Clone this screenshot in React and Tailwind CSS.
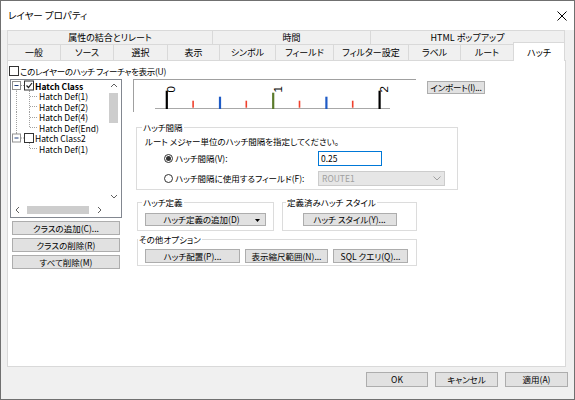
const ui = "font-['Noto_Sans_CJK_JP',sans-serif] [font-feature-settings:'palt']";

function Btn({ className = '', children }) {
  return (
    <div
      className={`flex items-center justify-center whitespace-nowrap border border-[#adadad] bg-[#e1e1e1] text-[8.5px] leading-none text-black ${className}`}
    >
      {children}
    </div>
  );
}

function Group({ title, className = '', legendClass = '', children }) {
  return (
    <fieldset className={`border border-[#dcdcdc] ${className}`}>
      <legend className={`px-[1px] text-[8.5px] leading-[12px] ${legendClass}`}>{title}</legend>
      {children}
    </fieldset>
  );
}

function Radio({ checked }) {
  return (
    <span className="flex h-[9px] w-[9px] shrink-0 items-center justify-center rounded-full border border-[#333] bg-white">
      {checked && <span className="h-[5px] w-[5px] rounded-full bg-[#333]" />}
    </span>
  );
}

function Chevron({ dir }) {
  const pts = {
    up: '1,5 4,2 7,5',
    down: '1,2 4,5 7,2',
    left: '5,1 2,4 5,7',
    right: '2,1 5,4 2,7',
  }[dir];
  return (
    <svg width="8" height="8" viewBox="0 0 8 8">
      <polyline points={pts} fill="none" stroke="#606060" strokeWidth="1" />
    </svg>
  );
}

// tree guide lines, drawn per row
const dot = { stroke: '#a0a0a0', strokeWidth: 1, strokeDasharray: '1 1' };

function ClassRow({ h, label, checked, bold, first }) {
  const c = h / 2;
  return (
    <div className="flex items-center" style={{ height: h }}>
      <svg width="24" height={h} className="shrink-0">
        {!first && <line x1="5.5" y1="0" x2="5.5" y2={c - 4} {...dot} />}
        {first && <line x1="5.5" y1={c + 4} x2="5.5" y2={h} {...dot} />}
        <rect x="1.5" y={c - 4} width="8" height="8" fill="white" stroke="#919191" />
        <line x1="3.5" y1={c} x2="7.5" y2={c} stroke="#1f3d7a" />
        <line x1="10" y1={c} x2="13" y2={c} {...dot} />
        <line x1="18.5" y1={c + 5} x2="18.5" y2={h} {...dot} />
        <rect x="13.5" y={c - 4.5} width="9" height="9" fill="white" stroke="#333" />
        {checked && (
          <polyline
            points={`15.5,${c} 17.5,${c + 2} 21,${c - 2.5}`}
            fill="none"
            stroke="#222"
            strokeWidth="1.2"
          />
        )}
      </svg>
      <span className={`whitespace-nowrap text-[8.5px] leading-[10px] ${bold ? 'font-bold' : ''}`}>
        {label}
      </span>
    </div>
  );
}

function DefRow({ h, label, last, outer }) {
  const c = h / 2;
  return (
    <div className="flex items-center" style={{ height: h }}>
      <svg width="28" height={h} className="shrink-0">
        {outer && <line x1="5.5" y1="0" x2="5.5" y2={h} {...dot} />}
        <line x1="18.5" y1="0" x2="18.5" y2={last ? c : h} {...dot} />
        <line x1="19" y1={Math.floor(c) + 0.5} x2="26" y2={Math.floor(c) + 0.5} {...dot} />
      </svg>
      <span className="whitespace-nowrap text-[8.5px] leading-[10px]">{label}</span>
    </div>
  );
}

function Tree() {
  return (
    <div className="flex h-[139px] w-[112px] flex-col border border-[#828790] bg-white">
      <div className="flex min-h-0 flex-1">
        <div className="min-w-0 flex-1 overflow-hidden">
          <ClassRow h={11} label="Hatch Class" checked bold first />
          <DefRow h={10} label="Hatch Def(1)" outer />
          <DefRow h={11} label="Hatch Def(2)" outer />
          <DefRow h={10} label="Hatch Def(4)" outer />
          <DefRow h={11} label="Hatch Def(End)" outer last />
          <ClassRow h={10} label="Hatch Class2" />
          <DefRow h={11} label="Hatch Def(1)" last />
        </div>
        {/* vertical scrollbar */}
        <div className="flex w-[15px] flex-col bg-white">
          <div className="flex h-[12px] items-center justify-center">
            <Chevron dir="up" />
          </div>
          <div className="mx-[3px] mt-[1px] h-[30px] bg-[#cdcdcd]" />
          <div className="flex-1" />
          <div className="flex h-[12px] items-center justify-center">
            <Chevron dir="down" />
          </div>
        </div>
      </div>
      {/* horizontal scrollbar */}
      <div className="flex h-[14px]">
        <div className="flex w-[13px] items-center justify-center">
          <Chevron dir="left" />
        </div>
        <div className="my-[3px] ml-[3px] w-[62px] bg-[#cdcdcd]" />
        <div className="flex-1" />
        <div className="flex w-[13px] items-center justify-center">
          <Chevron dir="right" />
        </div>
        <div className="w-[15px] bg-white" />
      </div>
    </div>
  );
}

function Ruler() {
  const ticks = ['k', 'r', 'b', 'r', 'g', 'r', 'b', 'r', 'k'];
  const col = { k: '#000000', r: '#f0412d', b: '#1e5bc6', g: '#5b7b2b' };
  const top = { k: 10.7, r: 20.7, b: 16.7, g: 12.7 };
  const labels = { 0: '0', 4: '1', 8: '2' };
  return (
    <svg width="282" height="32" viewBox="0 0 282 32" className="block">
      <line x1="21" y1="28.5" x2="256" y2="28.5" stroke="#a8a8a8" />
      {ticks.map((t, i) => {
        const x = 32.7 + 26.6 * i;
        return (
          <g key={i}>
            <rect
              x={x - 1}
              y={top[t]}
              width={t === 'r' ? 1.6 : 2.2}
              height={(t === 'r' ? 27.7 : 29) - top[t]}
              fill={col[t]}
            />
            {labels[i] && (
              <text
                transform={`translate(${x + 8.5} 12.5) rotate(-90)`}
                fontFamily="Liberation Sans, sans-serif"
                fontSize="11.5"
                fill="#000"
              >
                {labels[i]}
              </text>
            )}
          </g>
        );
      })}
    </svg>
  );
}

const row1 = [
  ['属性の結合とリレート', 205],
  ['時間', 158],
  ['HTML ポップアップ', 195],
];
const row2 = [
  ['一般', 53],
  ['ソース', 53],
  ['選択', 54],
  ['表示', 52],
  ['シンボル', 56],
  ['フィールド', 58],
  ['フィルター設定', 75],
  ['ラベル', 52],
  ['ルート', 53],
];

export default function App() {
  return (
    <div
      className={`flex h-[400px] w-[575px] flex-col border border-[#707070] bg-[#f0f0f0] text-black ${ui}`}
    >
      {/* title bar */}
      <div className="flex h-[29px] shrink-0 items-center justify-between bg-white pl-[7px] pr-[7px]">
        <span className="text-[9.5px] leading-none">レイヤー プロパティ</span>
        <svg width="10" height="10" viewBox="0 0 10 10">
          <path d="M0.5 0.5 L9.5 9.5 M9.5 0.5 L0.5 9.5" stroke="#000" strokeWidth="1" />
        </svg>
      </div>

      {/* tabs */}
      <div className="pl-[6px]">
        <div className="flex h-[14px]">
          {row1.map(([t, w], i) => (
            <div
              key={t}
              style={{ width: w }}
              className={`flex items-center justify-center border-l border-t border-[#d9d9d9] text-[9px] leading-none ${
                i === row1.length - 1 ? 'border-r' : ''
              }`}
            >
              {t}
            </div>
          ))}
        </div>
        <div className="flex h-[16px] items-end">
          {row2.map(([t, w]) => (
            <div
              key={t}
              style={{ width: w }}
              className="flex h-[16px] items-center justify-center border-l border-t border-[#d9d9d9] text-[9px] leading-none"
            >
              {t}
            </div>
          ))}
          <div className="relative z-10 -mb-px flex h-[19px] w-[52px] items-center justify-center border-x border-t border-[#d9d9d9] bg-white text-[9px] leading-none">
            ハッチ
          </div>
        </div>

        {/* panel */}
        <div className="h-[307px] w-[559px] border border-[#d9d9d9] bg-white pl-[1px] pt-[4px]">
          <div className="flex h-[12px] items-center">
            <span className="h-[10px] w-[10px] border border-[#333] bg-white" />
            <span className="ml-[1px] text-[8.5px] leading-none tracking-[-0.3px]">
              このレイヤーのハッチ フィーチャを表示(U)
            </span>
          </div>

          <div className="mt-[2px] flex">
            {/* left column */}
            <div className="ml-[1px] w-[112px]">
              <Tree />
              <div className="mt-[3px] flex flex-col gap-[3px] px-[2px]">
                <Btn className="h-[14px]">クラスの追加(C)...</Btn>
                <Btn className="h-[14px]">クラスの削除(R)</Btn>
                <Btn className="h-[14px]">すべて削除(M)</Btn>
              </div>
            </div>

            {/* right column */}
            <div className="ml-[11px]">
              <div className="flex items-start">
                <div className="h-[33px] w-[283px] border-l border-t border-[#a0a0a0]">
                  <Ruler />
                </div>
                <Btn className="ml-[11px] mt-[2px] h-[13px] w-[58px] tracking-[-0.2px]">インポート(I)...</Btn>
              </div>

              <Group title="ハッチ間隔" className="ml-[3px] mt-[9px] w-[322px] pb-[3px]" legendClass="ml-[5px]">
                <div className="mt-[2px] flex h-[12px] items-center pl-[8px] text-[8.5px] leading-none">
                  ルート メジャー単位のハッチ間隔を指定してください。
                </div>
                <div className="mt-[4px] flex h-[15px] items-center pl-[27px]">
                  <div className="flex w-[154px] items-center gap-[2px]">
                    <Radio checked />
                    <span className="text-[8.5px] leading-none">ハッチ間隔(V):</span>
                  </div>
                  <div className="flex h-[15px] w-[64px] items-center border border-[#0078d7] bg-white pl-[2px] text-[8.5px] leading-none">
                    0.25
                  </div>
                </div>
                <div className="mt-[5px] flex h-[15px] items-center pl-[27px]">
                  <div className="flex w-[154px] items-center gap-[2px]">
                    <Radio />
                    <span className="text-[8.5px] leading-none">ハッチ間隔に使用するフィールド(F):</span>
                  </div>
                  <div className="flex h-[15px] w-[127px] items-center justify-between border border-[#cccccc] bg-[#e6e6e6] pl-[3px] pr-[3px] text-[8.5px] leading-none text-[#a0a0a0]">
                    <span>ROUTE1</span>
                    <svg width="8" height="5" viewBox="0 0 8 5">
                      <polyline points="0.5,0.5 4,4 7.5,0.5" fill="none" stroke="#a0a0a0" />
                    </svg>
                  </div>
                </div>
              </Group>

              <div className="ml-[4px] mt-[6px] flex gap-[8px]">
                <Group title="ハッチ定義" className="w-[137px] pb-[4px]" legendClass="ml-[4px]">
                  <Btn className="relative ml-[7px] mt-[5px] h-[13px] w-[121px]">
                    <span className="-ml-[8px]">ハッチ定義の追加(D)</span>
                    <svg width="5" height="3" viewBox="0 0 5 3" className="absolute right-[5px] top-[5px]">
                      <polygon points="0,0 5,0 2.5,3" fill="#000" />
                    </svg>
                  </Btn>
                </Group>
                <Group title="定義済みハッチ スタイル" className="w-[135px] pb-[4px]" legendClass="ml-[3px]">
                  <div className="mt-[5px] flex justify-center">
                    <Btn className="h-[13px] w-[94px]">ハッチ スタイル(Y)...</Btn>
                  </div>
                </Group>
              </div>

              <Group title="その他オプション" className="ml-[4px] mt-[2px] w-[280px] pb-[2px]">
                <div className="ml-[7px] mt-[4px] flex gap-[5px]">
                  <Btn className="h-[14px] w-[95px]">ハッチ配置(P)...</Btn>
                  <Btn className="h-[14px] w-[83px]">表示縮尺範囲(N)...</Btn>
                  <Btn className="h-[14px] w-[75px]">SQL クエリ(Q)...</Btn>
                </div>
              </Group>
            </div>
          </div>
        </div>
      </div>

      {/* footer */}
      <div className="flex justify-end gap-[7px] pr-[6px] pt-[5px]">
        <Btn className="h-[15px] w-[62px] border-[#0078d7]">OK</Btn>
        <Btn className="h-[15px] w-[63px]">キャンセル</Btn>
        <Btn className="h-[15px] w-[63px]">適用(A)</Btn>
      </div>
    </div>
  );
}
